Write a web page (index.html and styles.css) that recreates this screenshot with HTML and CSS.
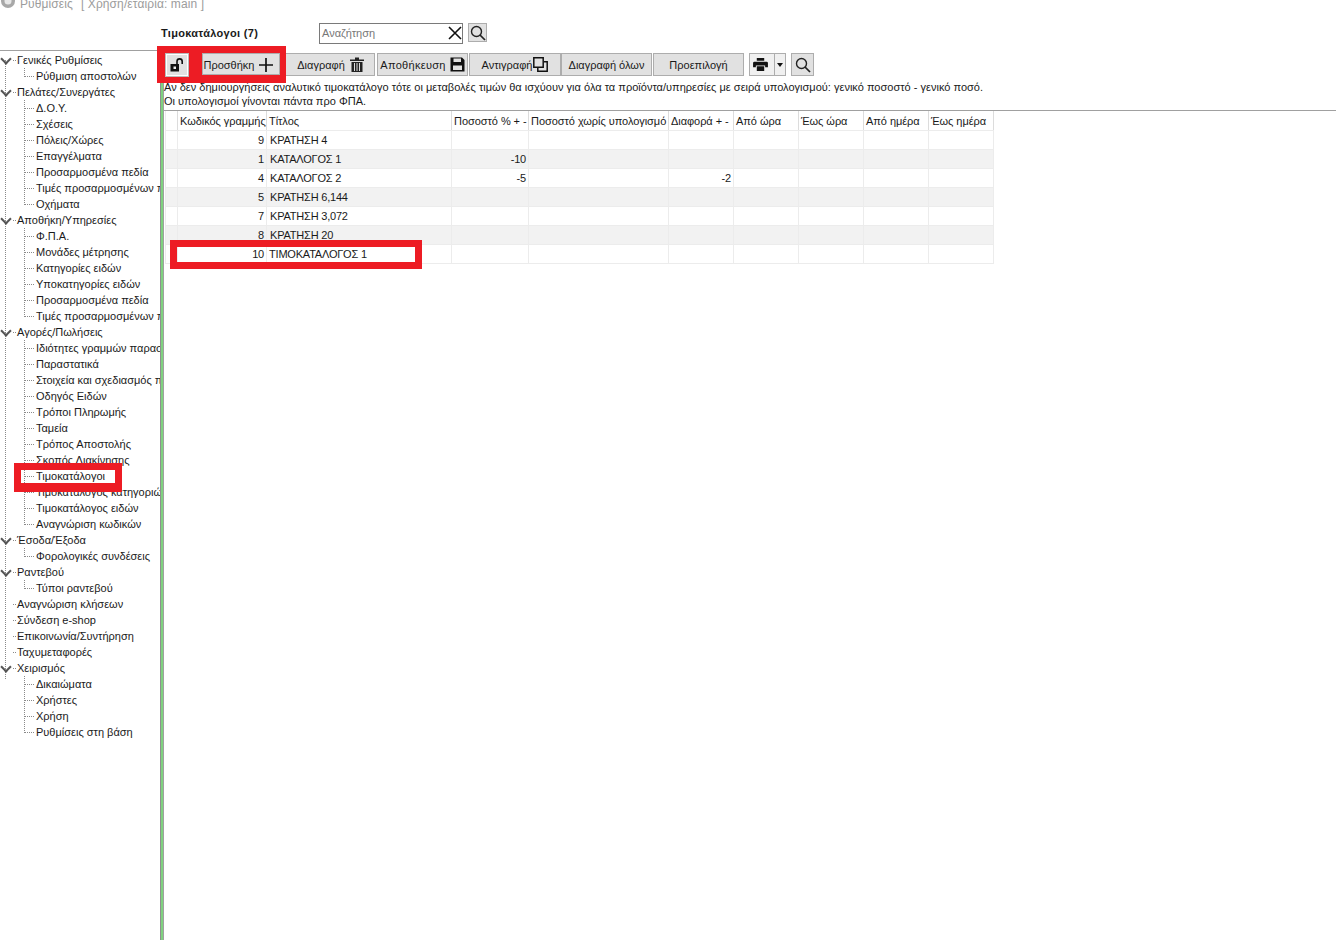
FILE: index.html
```html
<!DOCTYPE html>
<html lang="el">
<head>
<meta charset="utf-8">
<title>Τιμοκατάλογοι</title>
<link rel="stylesheet" href="styles.css">
</head>
<body>
<div class="app">
  <div class="topbar">
    <svg class="app-icon" width="16" height="16" viewBox="0 0 16 16"><circle cx="8" cy="8" r="7" fill="#a8a8a8"/><circle cx="8" cy="8" r="3.5" fill="#e8e8e8"/></svg>
    <span>Ρυθμίσεις</span><span class="user">[ Χρήση/εταιρία: main ]</span>
  </div>
  <div class="titlerow">
    <div class="title">Τιμοκατάλογοι (7)</div>
    <div class="search">
      <span class="search-text">Αναζήτηση</span>
      <svg width="14" height="14" viewBox="0 0 14 14"><path d="M1 1 13 13M13 1 1 13" stroke="#111" stroke-width="1.6" fill="none"/></svg>
    </div>
    <button class="iconbtn small"><svg width="16" height="16" viewBox="0 0 16 16"><circle cx="6.5" cy="6.5" r="5" stroke="#222" stroke-width="1.4" fill="none"/><path d="M10 10 15 15" stroke="#222" stroke-width="1.7"/></svg></button>
  </div>
  <div class="split">
    <aside class="side">
      <ul class="tree">
        <li class="node"><span class="label top">Γενικές Ρυθμίσεις</span>
          <ul><li>Ρύθμιση αποστολών</li></ul></li>
        <li class="node"><span class="label top">Πελάτες/Συνεργάτες</span>
          <ul><li>Δ.Ο.Υ.</li><li>Σχέσεις</li><li>Πόλεις/Χώρες</li><li>Επαγγέλματα</li><li>Προσαρμοσμένα πεδία</li><li>Τιμές προσαρμοσμένων πεδίων</li><li>Οχήματα</li></ul></li>
        <li class="node"><span class="label top">Αποθήκη/Υπηρεσίες</span>
          <ul><li>Φ.Π.Α.</li><li>Μονάδες μέτρησης</li><li>Κατηγορίες ειδών</li><li>Υποκατηγορίες ειδών</li><li>Προσαρμοσμένα πεδία</li><li>Τιμές προσαρμοσμένων πεδίων</li></ul></li>
        <li class="node"><span class="label top">Αγορές/Πωλήσεις</span>
          <ul><li>Ιδιότητες γραμμών παραστατικών</li><li>Παραστατικά</li><li>Στοιχεία και σχεδιασμός παραστατικών</li><li>Οδηγός Ειδών</li><li>Τρόποι Πληρωμής</li><li>Ταμεία</li><li>Τρόπος Αποστολής</li><li>Σκοπός Διακίνησης</li><li>Τιμοκατάλογοι</li><li>Τιμοκατάλογος κατηγοριών</li><li>Τιμοκατάλογος ειδών</li><li>Αναγνώριση κωδικών</li></ul></li>
        <li class="node"><span class="label top">Έσοδα/Έξοδα</span>
          <ul><li>Φορολογικές συνδέσεις</li></ul></li>
        <li class="node"><span class="label top">Ραντεβού</span>
          <ul><li>Τύποι ραντεβού</li></ul></li>
        <li class="leaf">Αναγνώριση κλήσεων</li>
        <li class="leaf">Σύνδεση e-shop</li>
        <li class="leaf">Επικοινωνία/Συντήρηση</li>
        <li class="leaf">Ταχυμεταφορές</li>
        <li class="node last"><span class="label top">Χειρισμός</span>
          <ul><li>Δικαιώματα</li><li>Χρήστες</li><li>Χρήση</li><li>Ρυθμίσεις στη βάση</li></ul></li>
      </ul>
    </aside>
    <div class="splitter"></div>
    <main class="content">
      <div class="toolbar">
        <button class="iconbtn lock raised"><svg width="16" height="16" viewBox="0 0 16 16"><path d="M8 7V4.5a2.6 2.6 0 0 1 5.2 0V7" stroke="#111" stroke-width="1.6" fill="none"/><rect x="1.5" y="7" width="8.5" height="7.5" fill="#111"/><rect x="4.5" y="9.5" width="2.5" height="2.5" fill="#eee"/></svg></button>
        <button class="btn add raised">Προσθήκη<svg width="16" height="16" viewBox="0 0 16 16"><path d="M8 1V15M1 8H15" stroke="#111" stroke-width="1.7"/></svg></button>
        <button class="btn del">Διαγραφή<svg width="14" height="15" viewBox="0 0 14 15"><path d="M0 2.5H14V4H0ZM5 .5H9V2.500H5ZM1.500 5H12.500V15H1.500Z" fill="#222"/><path d="M4.500 6V14M7 6V14M9.500 6V14" stroke="#ddd" stroke-width="1"/></svg></button>
        <button class="btn save">Αποθήκευση<svg width="15" height="15" viewBox="0 0 15 15"><path d="M.5.500H12L14.500 3V14.500H.5Z" fill="#111"/><rect x="3.500" y="1.500" width="7.500" height="3.500" fill="#e1e1e1"/><rect x="3" y="8.500" width="9" height="4.500" fill="#e1e1e1"/></svg></button>
        <button class="btn copy">Αντιγραφή<svg width="15" height="15" viewBox="0 0 15 15"><path d="M.8.800H10.200V10.200H.8Z" stroke="#111" stroke-width="1.500" fill="none"/><path d="M11 4.800H14.200V14.200H4.800V11" stroke="#111" stroke-width="1.500" fill="none"/></svg></button>
        <button class="btn all">Διαγραφή όλων</button>
        <button class="btn preset">Προεπιλογή</button>
        <div class="print">
          <span class="print-main"><svg width="15" height="13" viewBox="0 0 16 14"><path d="M4 0H12V3H4ZM1.500 4H14.500A1.500 1.500 0 0 1 16 5.500V10H13V8H3V10H0V5.500A1.500 1.500 0 0 1 1.500 4ZM4 9H12V14H4Z" fill="#111"/></svg></span>
          <span class="print-drop"><svg width="6" height="4" viewBox="0 0 6 4"><path d="M0 0H6L3 4Z" fill="#111"/></svg></span>
        </div>
        <button class="iconbtn find"><svg width="16" height="16" viewBox="0 0 16 16"><circle cx="6.500" cy="6.500" r="5" stroke="#222" stroke-width="1.400" fill="none"/><path d="M10 10 15 15" stroke="#222" stroke-width="1.700"/></svg></button>
      </div>
      <p class="note">Αν δεν δημιουργήσεις αναλυτικό τιμοκατάλογο τότε οι μεταβολές τιμών θα ισχύουν για όλα τα προϊόντα/υπηρεσίες με σειρά υπολογισμού: γενικό ποσοστό - γενικό ποσό.</p>
      <p class="note">Οι υπολογισμοί γίνονται πάντα προ ΦΠΑ.</p>
      <div class="gridwrap">
        <table class="grid">
          <colgroup><col class="c0"><col class="c1"><col class="c2"><col class="c3"><col class="c4"><col class="c5"><col class="c6"><col class="c6"><col class="c6"><col class="c6"></colgroup>
          <thead><tr><th></th><th>Κωδικός γραμμής</th><th>Τίτλος</th><th>Ποσοστό % + -</th><th>Ποσοστό χωρίς υπολογισμό</th><th>Διαφορά + -</th><th>Από ώρα</th><th>Έως ώρα</th><th>Από ημέρα</th><th>Έως ημέρα</th></tr></thead>
          <tbody>
            <tr><td></td><td class="num">9</td><td>ΚΡΑΤΗΣΗ 4</td><td></td><td></td><td></td><td></td><td></td><td></td><td></td></tr>
            <tr><td></td><td class="num">1</td><td>ΚΑΤΑΛΟΓΟΣ 1</td><td class="num">-10</td><td></td><td></td><td></td><td></td><td></td><td></td></tr>
            <tr><td></td><td class="num">4</td><td>ΚΑΤΑΛΟΓΟΣ 2</td><td class="num">-5</td><td></td><td class="num">-2</td><td></td><td></td><td></td><td></td></tr>
            <tr><td></td><td class="num">5</td><td>ΚΡΑΤΗΣΗ 6,144</td><td></td><td></td><td></td><td></td><td></td><td></td><td></td></tr>
            <tr><td></td><td class="num">7</td><td>ΚΡΑΤΗΣΗ 3,072</td><td></td><td></td><td></td><td></td><td></td><td></td><td></td></tr>
            <tr><td></td><td class="num">8</td><td>ΚΡΑΤΗΣΗ 20</td><td></td><td></td><td></td><td></td><td></td><td></td><td></td></tr>
            <tr><td></td><td class="num">10</td><td class="editing">ΤΙΜΟΚΑΤΑΛΟΓΟΣ 1</td><td></td><td></td><td></td><td></td><td></td><td></td><td></td></tr>
          </tbody>
        </table>
      </div>
    </main>
  </div>
  <div class="mark mark-tools"></div>
  <div class="mark mark-row"></div>
  <div class="mark mark-tree"></div>
</div>
</body>
</html>
```
FILE: styles.css
```css
* { box-sizing: border-box; }
html, body { margin: 0; padding: 0; background: #fff; }
body { font: 11px/16px "Liberation Sans", Arial, sans-serif; color: #1a1a1a; }
.app { position: relative; width: 1336px; height: 940px; overflow: hidden; display: flex; flex-direction: column; }

.topbar { height: 10px; display: flex; align-items: flex-start; gap: 4px; color: #9c9c9c; font-size: 12px; line-height: 14px; letter-spacing: .1px; flex: none; }
.topbar span { margin-top: -3px; }
.app-icon { margin-top: -7px; flex: none; }
.topbar .user { margin-left: 4px; }

.titlerow { height: 40px; flex: none; display: flex; align-items: flex-start; padding: 13px 0 0 161px; }
.title { width: 158px; font-weight: bold; line-height: 20px; letter-spacing: .3px; }
.search { width: 144px; height: 21px; border: 1px solid #7a7a7a; display: flex; align-items: center; justify-content: space-between; padding: 0 0 1px 2px; }
.search-text { color: #777; }
.iconbtn { padding: 0; background: #e1e1e1; border: 1px solid #adadad; display: flex; align-items: center; justify-content: center; }
.small { width: 19px; height: 19px; margin: 0 0 0 5px; }

.split { flex: 1; display: flex; min-height: 0; }
.side { width: 160px; flex: none; border-top: 1px solid #a0a0a0; overflow: hidden; padding-top: 1px; }
.splitter { width: 4px; flex: none; background: linear-gradient(90deg, #8f8f8f 0 1px, #7fd27f 1px 3px, #a0a0a0 3px 4px); }

.tree, .tree ul { list-style: none; margin: 0; padding: 0; }
.tree { white-space: nowrap; background-image: repeating-linear-gradient(#8a8a8a 0 1px, transparent 1px 2px); background-size: 1px 620px; background-position: 5px 8px; background-repeat: no-repeat; }
.tree li { height: 16px; line-height: 16px; }
.tree .node { height: auto; position: relative; }
.node > .label { display: block; height: 16px; padding-left: 17px; position: relative; }
.node > .label::before { content: ""; position: absolute; left: 2px; top: 3px; width: 6px; height: 6px; border: solid #555; border-width: 0 2px 2px 0; transform: rotate(45deg); }
.node > .label::after, .tree .leaf::before { content: ""; position: absolute; left: 13px; top: 8px; width: 3px; border-top: 1px dotted #8a8a8a; }
.tree .leaf { position: relative; padding-left: 17px; }
.node > ul { background-image: repeating-linear-gradient(#8a8a8a 0 1px, transparent 1px 2px); background-size: 1px calc(100% - 8px); background-position: 24px 0; background-repeat: no-repeat; }
.node > ul > li { padding-left: 36px; position: relative; }
.node > ul > li::before { content: ""; position: absolute; left: 24px; top: 8px; width: 10px; border-top: 1px dotted #8a8a8a; }

.content { flex: 1; min-width: 0; }
.toolbar { display: flex; align-items: flex-start; padding: 3px 0 0 1px; height: 30px; }
.btn { height: 23px; padding: 0; background: #e1e1e1; border: 1px solid #adadad; font: inherit; color: inherit; display: flex; align-items: center; justify-content: center; gap: 5px; }
.raised { position: relative; z-index: 2; }
.lock { width: 24px; height: 24px; border: 2px solid #fff; outline: 1px solid #bbb; outline-offset: -1px; }
.add { width: 78px; margin-left: 13px; height: 22px; padding: 2px 4px 0 0; gap: 4px; }
.del { width: 92px; margin-left: 3px; padding-left: 3px; }
.save { width: 91px; margin-left: 2px; gap: 4px; letter-spacing: .3px; }
.copy { width: 92px; gap: 1px; margin-left: 1px; }
.all { width: 91px; }
.preset { width: 91px; margin-left: 1px; }
.print { width: 37px; height: 23px; margin-left: 5px; display: flex; border: 1px solid #adadad; background: #f0f0f0; }
.print-main { width: 25px; display: flex; align-items: center; justify-content: center; border-right: 1px solid #adadad; padding-right: 3px; }
.print-drop { flex: 1; display: flex; align-items: center; justify-content: center; }
.find { width: 23px; height: 23px; margin-left: 5px; }

.note { margin: 0; height: 14px; line-height: 14px; padding-left: 0; white-space: nowrap; letter-spacing: .01px; }
.gridwrap { border-top: 1px solid #a0a0a0; margin-top: 2px; padding-left: 1px; }
.grid { border-collapse: collapse; table-layout: fixed; width: 828px; }
.c0 { width: 12px; } .c1 { width: 89px; } .c2 { width: 185px; } .c3 { width: 77px; } .c4 { width: 140px; } .c5 { width: 65px; } .c6 { width: 65px; }
.grid th, .grid td { border: 1px solid #ececec; padding: 0 3px; overflow: hidden; white-space: nowrap; font-weight: normal; text-align: left; }
.grid td { height: 19px; letter-spacing: -.2px; }
.grid th { height: 19px; background: #fff; border-right-color: #dcdcdc; border-top: 0; padding: 2px 0 0 2px; letter-spacing: -.05px; }
.grid td.num { text-align: right; padding-right: 2px; }
.grid td.editing { padding-left: 2px; }
.grid tbody tr:nth-child(even) td { background: #f2f2f2; }

.mark { position: absolute; z-index: 1; border: 7px solid #ed1c24; }
.mark-tools { left: 157px; top: 46px; width: 129px; height: 37px; background: #ed1c24; }
.mark-row { left: 170px; top: 240px; width: 252px; height: 29px; }
.mark-tree { left: 14px; top: 463px; width: 108px; height: 29px; border-bottom-width: 9px; }
```
